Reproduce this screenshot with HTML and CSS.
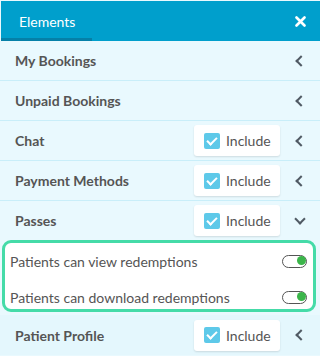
FILE: index.html
```html
<!DOCTYPE html>
<html>
<head>
<meta charset="utf-8">
<link rel="stylesheet" href="styles.css">
</head>
<body>
<div class="panel">
  <div class="header">
    <div class="tab">Elements</div>
    <div class="close">
      <svg width="11" height="11" viewBox="0 0 11 11"><path d="M1.5 1.5 L9.5 9.5 M9.5 1.5 L1.5 9.5" stroke="#fff" stroke-width="2.6" stroke-linecap="round"/></svg>
    </div>
  </div>
  <div class="row">
    <span class="label">My Bookings</span>
    <span class="chev left"></span>
  </div>
  <div class="row">
    <span class="label">Unpaid Bookings</span>
    <span class="chev left"></span>
  </div>
  <div class="row">
    <span class="label">Chat</span>
    <span class="inc"><span class="cb"></span>Include</span>
    <span class="chev left"></span>
  </div>
  <div class="row">
    <span class="label">Payment Methods</span>
    <span class="inc"><span class="cb"></span>Include</span>
    <span class="chev left"></span>
  </div>
  <div class="row open">
    <span class="label">Passes</span>
    <span class="inc"><span class="cb"></span>Include</span>
    <span class="chev down"></span>
  </div>
  <div class="sub">
    <div class="subrow"><span>Patients can view redemptions</span><span class="toggle"></span></div>
    <div class="subrow"><span>Patients can download redemptions</span><span class="toggle"></span></div>
  </div>
  <div class="row last">
    <span class="label">Patient Profile</span>
    <span class="inc"><span class="cb"></span>Include</span>
    <span class="chev left"></span>
  </div>
</div>
</body>
</html>
```
FILE: styles.css
```css
html, body { margin: 0; padding: 0; }
body {
  width: 320px;
  height: 356px;
  overflow: hidden;
  background: #e9f9fe;
  font-family: Lato, "Open Sans", sans-serif;
  color: #555;
}
.panel { padding-top: 1px; }
.header {
  margin-left: 1px;
  height: 40px;
  background: #009fcc;
  display: flex;
  justify-content: space-between;
  align-items: stretch;
}
.tab {
  width: 91px;
  box-sizing: border-box;
  border-bottom: 3px solid #0580a8;
  color: #fff;
  font-size: 14px;
  padding-left: 18px;
  display: flex;
  align-items: center;
  padding-top: 3px;
}
.close {
  display: flex;
  align-items: center;
  padding-right: 14px;
  padding-top: 1px;
}
.row {
  height: 39px;
  border-bottom: 1px solid #c9eef9;
  display: flex;
  align-items: center;
  padding: 0 15px;
}
.row.open { border-bottom: none; }
.row.last { border-bottom: none; background: #e4f7fd; margin-top: 3px; height: 40px; }
.label {
  font-weight: bold;
  font-size: 14px;
  flex: 1;
}
.inc {
  width: 86px;
  height: 31px;
  box-sizing: border-box;
  background: #fff;
  border-radius: 3px;
  box-shadow: 0 1px 2px rgba(0,0,0,0.12);
  display: flex;
  align-items: center;
  padding-left: 10px;
  font-size: 14px;
  color: #555;
  margin-right: 17px;
}
.cb {
  width: 16px;
  height: 16px;
  border-radius: 2px;
  background: #5ec9e9;
  margin-right: 6px;
  position: relative;
}
.cb::after {
  content: "";
  position: absolute;
  left: 5px;
  top: 2px;
  width: 4px;
  height: 8px;
  border: solid #fff;
  border-width: 0 2.5px 2.5px 0;
  transform: rotate(45deg);
}
.chev {
  width: 8px;
  height: 8px;
  box-sizing: border-box;
  border-left: 2.5px solid #505a64;
  border-bottom: 2.5px solid #505a64;
}
.chev.left { transform: rotate(45deg); }
.chev.down { transform: translate(-1px, -2px) rotate(-45deg); }
.sub {
  margin: 0 4px 0 2px;
  border: 3px solid #45dba8;
  border-radius: 9px;
  background: #fff;
  padding: 6px 0 0;
  display: flex;
  flex-direction: column;
  gap: 12px;
}
.subrow {
  height: 24px;
  display: flex;
  align-items: center;
  justify-content: space-between;
  padding: 0 6px 0 5px;
  font-size: 14px;
  color: #555;
}
.toggle {
  width: 25px;
  height: 13px;
  box-sizing: border-box;
  border: 1.5px solid #555;
  border-radius: 7px;
  position: relative;
}
.toggle::after {
  content: "";
  position: absolute;
  right: 0.5px;
  top: 0.5px;
  width: 9px;
  height: 9px;
  border-radius: 50%;
  background: #3bb54a;
}
```
